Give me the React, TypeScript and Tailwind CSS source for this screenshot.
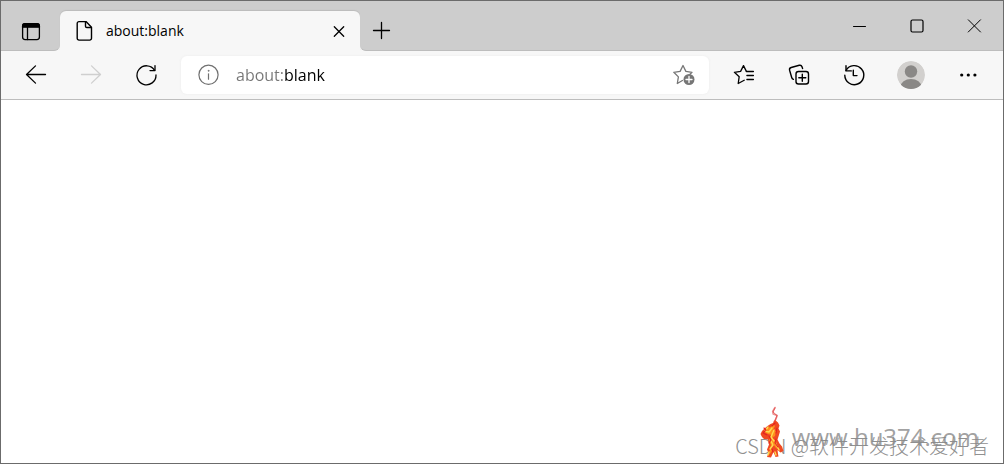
import type { ReactNode } from "react";

function Icon({ size = 24, width = 1.3, children }: { size?: number; width?: number; children: ReactNode }) {
  return (
    <svg
      width={size}
      height={size}
      viewBox={`0 0 ${size} ${size}`}
      fill="none"
      stroke="currentColor"
      strokeWidth={width}
      strokeLinecap="round"
      strokeLinejoin="round"
      aria-hidden="true"
    >
      {children}
    </svg>
  );
}

function TitleBar() {
  return (
    <header className="flex h-[50px] shrink-0 bg-[#f7f7f7]">
      <div className="flex items-center rounded-br-md border-b border-[#bdbdbd] bg-[#cdcdcd] pt-3 pr-[7px] pl-2">
        <button type="button" aria-label="Tab actions" className="flex h-9 w-11 items-center justify-center">
          <Icon>
            <rect x="3.6" y="3.6" width="16.8" height="16" rx="2.5" />
            <path d="M3.6 7.2V6.100A2.500 2.500 0 0 1 6.100 3.600h11.800a2.500 2.500 0 0 1 2.500 2.500v1.100z" fill="currentColor" />
            <path d="M8.500 7.500v12" />
          </Icon>
        </button>
      </div>
      <div className="w-[300px] bg-linear-to-b from-[#cdcdcd] from-50% to-[#f7f7f7] to-50% pt-[10px]">
        <div className="flex h-10 items-center rounded-t-md bg-[#f7f7f7] pr-[9px] pl-3 shadow-[0_-1px_1px_#bcbcbc]">
          <Icon width={1.4}>
            <path d="M7 2.600h7l5.500 5.600v11.100a1.800 1.800 0 0 1-1.800 1.800H7a1.800 1.800 0 0 1-1.800-1.800V4.400A1.800 1.800 0 0 1 7 2.600z" />
            <path d="M13.500 2.800v4.400a1.300 1.300 0 0 0 1.300 1.300h4.400" />
          </Icon>
          <span className="ml-[10px] flex-1 text-sm">about:blank</span>
          <button type="button" aria-label="Close tab" className="flex size-6 items-center justify-center">
            <Icon width={1.3}>
              <path d="M7.3 7.8l9.4 9.4M16.7 7.8l-9.400 9.400" />
            </Icon>
          </button>
        </div>
      </div>
      <div className="flex flex-1 items-start justify-between rounded-bl-md border-b border-[#bdbdbd] bg-[#cdcdcd]">
        <button type="button" aria-label="New tab" className="mt-[10px] flex h-10 w-11 items-center justify-center">
          <Icon width={1.3}>
            <path d="M3.500 11.500h16M11.500 3.500v16" />
          </Icon>
        </button>
        <div className="flex">
          <button type="button" aria-label="Minimize" className="flex h-[49px] w-[58px] items-center justify-center">
            <Icon width={1}>
              <path d="M7.500 12.500h12" />
            </Icon>
          </button>
          <button type="button" aria-label="Maximize" className="flex h-[49px] w-[58px] items-center justify-center">
            <Icon width={1.2}>
              <rect x="7" y="6" width="12" height="12" rx="1.500" />
            </Icon>
          </button>
          <button type="button" aria-label="Close" className="flex h-[49px] w-[58px] items-center justify-center">
            <Icon width={1}>
              <path d="M6.300 5.800l12.200 12.200M18.500 5.800l-12.200 12.200" />
            </Icon>
          </button>
        </div>
      </div>
    </header>
  );
}

function ToolButton({ label, className = "w-[55px]", disabled, children }: {
  label: string;
  className?: string;
  disabled?: boolean;
  children: ReactNode;
}) {
  return (
    <button
      type="button"
      aria-label={label}
      disabled={disabled}
      className={`flex h-10 items-center justify-center disabled:text-[#cfcfcf] ${className}`}
    >
      {children}
    </button>
  );
}

function AddressBar() {
  return (
    <div className="flex h-[38px] min-w-0 flex-1 items-center rounded-md bg-white pr-[13px] pl-4 shadow-[0_0_3px_#ececec]">
      <button type="button" aria-label="Site information" className="text-[#707070]">
        <Icon width={1.2}>
          <circle cx="11.500" cy="11.800" r="9.600" />
          <path d="M11.500 10.800v5.400" />
          <circle cx="11.500" cy="7.800" r="0.500" fill="currentColor" strokeWidth="0.700" />
        </Icon>
      </button>
      <input
        aria-label="Address"
        defaultValue="about:blank"
        className="ml-[15px] min-w-0 flex-1 bg-[linear-gradient(90deg,#767676_49px,#000_49px)] bg-clip-text text-base text-transparent caret-black outline-none"
      />
      <button type="button" aria-label="Add to favorites" className="text-[#767676]">
        <Icon>
          <path d="M10.400 17.500L5.300 20.500l1.100-6.600-4.600-4.600 6.300-.9 2.900-5.900 2.900 5.900 6.100.9-2 2" />
          <circle cx="17" cy="16.500" r="5.500" fill="currentColor" stroke="none" />
          <path d="M14 16.500h6M17 13.500v6" stroke="#fff" />
        </Icon>
      </button>
    </div>
  );
}

function Toolbar() {
  return (
    <nav aria-label="Browser toolbar" className="flex h-[49px] shrink-0 items-center gap-[7px] border-b border-[#bdbdbd] bg-[#f7f7f7] px-2">
      <div className="flex">
        <ToolButton label="Back">
          <Icon>
            <path d="M20.500 11.500h-19M10.500 2.900L1.500 11.500l9 8.600" />
          </Icon>
        </ToolButton>
        <ToolButton label="Forward" disabled>
          <Icon>
            <path d="M1.500 11.500h19M11.500 2.900l9 8.600-9 8.600" />
          </Icon>
        </ToolButton>
        <ToolButton label="Refresh">
          <Icon>
            <path d="M19.600 7.300a9.500 9.500 0 1 0 1.400 4.700" />
            <path d="M20 2.600v5h-5" />
          </Icon>
        </ToolButton>
      </div>
      <AddressBar />
      <div className="flex">
        <ToolButton label="Favorites">
          <Icon>
            <path d="M12.200 17.300L6.200 20.500l1-6.800-4.800-4.400 6.200-.9 2.900-5.800 2.900 5.800" />
            <path d="M14.400 8.500h7M14.900 12.500h6.500M14.900 16.500h6.500" />
          </Icon>
        </ToolButton>
        <ToolButton label="Collections">
          <Icon width={1.4}>
            <path d="M6.400 16.300a2.400 2.400 0 0 1-1.700-1.800L2.600 7.300a2.300 2.300 0 0 1 1.600-2.800L12.300 2.300a2.300 2.300 0 0 1 2.700 1.500l.6 1.700" />
            <rect x="9" y="8.500" width="12.500" height="12.500" rx="2.500" />
            <path d="M15.300 11.300v7M11.800 14.800h7" />
          </Icon>
        </ToolButton>
        <ToolButton label="History">
          <Icon width={1.4}>
            <path d="M4 7.500a9.500 9.500 0 1 1-1.200 4.700" />
            <path d="M4 2.800v5.100h5.300M11.300 7.300v5.300h3.700" />
          </Icon>
        </ToolButton>
        <ToolButton label="Profile" className="w-[60px]">
          <svg width="28" height="28" viewBox="0 0 28 28" aria-hidden="true">
            <clipPath id="avatar"><circle cx="14" cy="14" r="14" /></clipPath>
            <g clipPath="url(#avatar)">
              <circle cx="14" cy="14" r="14" fill="#d2d0ce" />
              <circle cx="14" cy="10.500" r="6.200" fill="#8a8886" />
              <ellipse cx="14" cy="26" rx="10.500" ry="8" fill="#8a8886" />
            </g>
          </svg>
        </ToolButton>
        <ToolButton label="Settings and more" className="w-[54px]">
          <svg width="24" height="24" viewBox="0 0 24 24" fill="currentColor" aria-hidden="true">
            <circle cx="5.700" cy="12" r="1.600" />
            <circle cx="12.300" cy="12" r="1.600" />
            <circle cx="18.900" cy="12" r="1.600" />
          </svg>
        </ToolButton>
      </div>
    </nav>
  );
}

function Flame() {
  return (
    <svg width="28" height="52" viewBox="0 0 28 52" fill="none" strokeLinecap="round" strokeLinejoin="round" aria-hidden="true">
      <path d="M17 1.500l-2.300 4 .5 2.500 4 1.500-1.500 4-1.700 2.500" stroke="#ee8f8f" strokeWidth="1.600" />
      <path d="M17 2l-2 4 4 3.500-2 5" stroke="#e03a3a" strokeWidth="0.700" />
      <path
        d="M17 14l3 2.500 1.500 3-1 3 1.500 3-1.500 5-1 3 2 4 2.500 3 1.500 4.500-3 1.500-3-2.500.5 4 .5 2.500-3 .5-2-5-2.500 5.500-4-.5 1.500-4-1.500-3.500 2-5-1-5-4-.5-2-2-1.500-3 1.500-3 3-3 2.500-2 3-2 2.500-1z"
        fill="#f04a22"
      />
      <path
        d="M15 18l2 2-2 4 3 1-1 5-3 2 4 3 1 5 3 4-4-2-3-4-2 3 1 4-3 4 1-6 1-4-2-5 3-5-4-1-4-2 3-4 4-1z"
        fill="#ff8f1c"
      />
      <path d="M10 21l-3 4 4 1 3-4M16 24l-3 7 3 4M13 35l2 4-3 4M18 38l3 6M11 46l-1 3M17 46l1 3" stroke="#ffd94f" strokeWidth="1.400" />
      <path d="M6 22l2 2-3 3 4 2M17 17l-3 3M19 22l-1 5M11 30l2 4-2 3M18 33l-1 4 3 4M14 43l1 3" stroke="#e32222" strokeWidth="1.100" />
    </svg>
  );
}

function Watermark() {
  return (
    <div className="pointer-events-none absolute right-0 bottom-0 h-16 w-[270px] whitespace-nowrap">
      <p className="absolute right-[14px] bottom-[5px] font-['Noto_Sans_CJK_SC',sans-serif] text-xl leading-6 font-light text-[#909090]">
        CSDN @软件开发技术爱好者
      </p>
      <p className="absolute right-6 bottom-[10px] text-2xl leading-8 font-medium text-[#888888]/80">www.hu374.com</p>
      <div className="absolute bottom-[5px] left-[25px]">
        <Flame />
      </div>
    </div>
  );
}

export default function App() {
  return (
    <div className="flex min-h-screen flex-col border border-[#6b6b6b] bg-white font-['Open_Sans','Noto_Sans_CJK_SC',sans-serif] text-black">
      <TitleBar />
      <Toolbar />
      <main className="relative flex-1">
        <Watermark />
      </main>
    </div>
  );
}
